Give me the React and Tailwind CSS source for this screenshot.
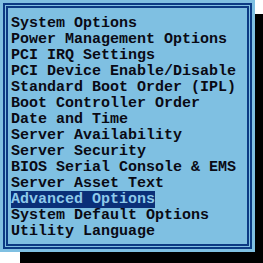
export default function App() {
  const items = [
    "System Options",
    "Power Management Options",
    "PCI IRQ Settings",
    "PCI Device Enable/Disable",
    "Standard Boot Order (IPL)",
    "Boot Controller Order",
    "Date and Time",
    "Server Availability",
    "Server Security",
    "BIOS Serial Console & EMS",
    "Server Asset Text",
    "Advanced Options",
    "System Default Options",
    "Utility Language",
  ];
  const selected = 11;

  return (
    <div className="w-[263px] h-[263px] bg-white overflow-hidden">
      <div className="w-[255px] h-[252px] bg-[#7fc0e2] p-[3px] shadow-[20px_14px_0_0_#000]">
        <div className="h-full border-2 border-[#0b3a84] p-px">
          <div className="h-full border-2 border-[#0b3a84] pt-[8px] pl-[3px] font-['Liberation_Mono',monospace] font-bold text-[15px] leading-[16px] text-[#0a0a14] whitespace-pre">
            {items.map((item, i) => (
              <div key={i}>
                {i === selected ? (
                  <span className="bg-[#0a2f78] text-[#8ec9ea]">{item}</span>
                ) : (
                  item
                )}
              </div>
            ))}
          </div>
        </div>
      </div>
    </div>
  );
}
